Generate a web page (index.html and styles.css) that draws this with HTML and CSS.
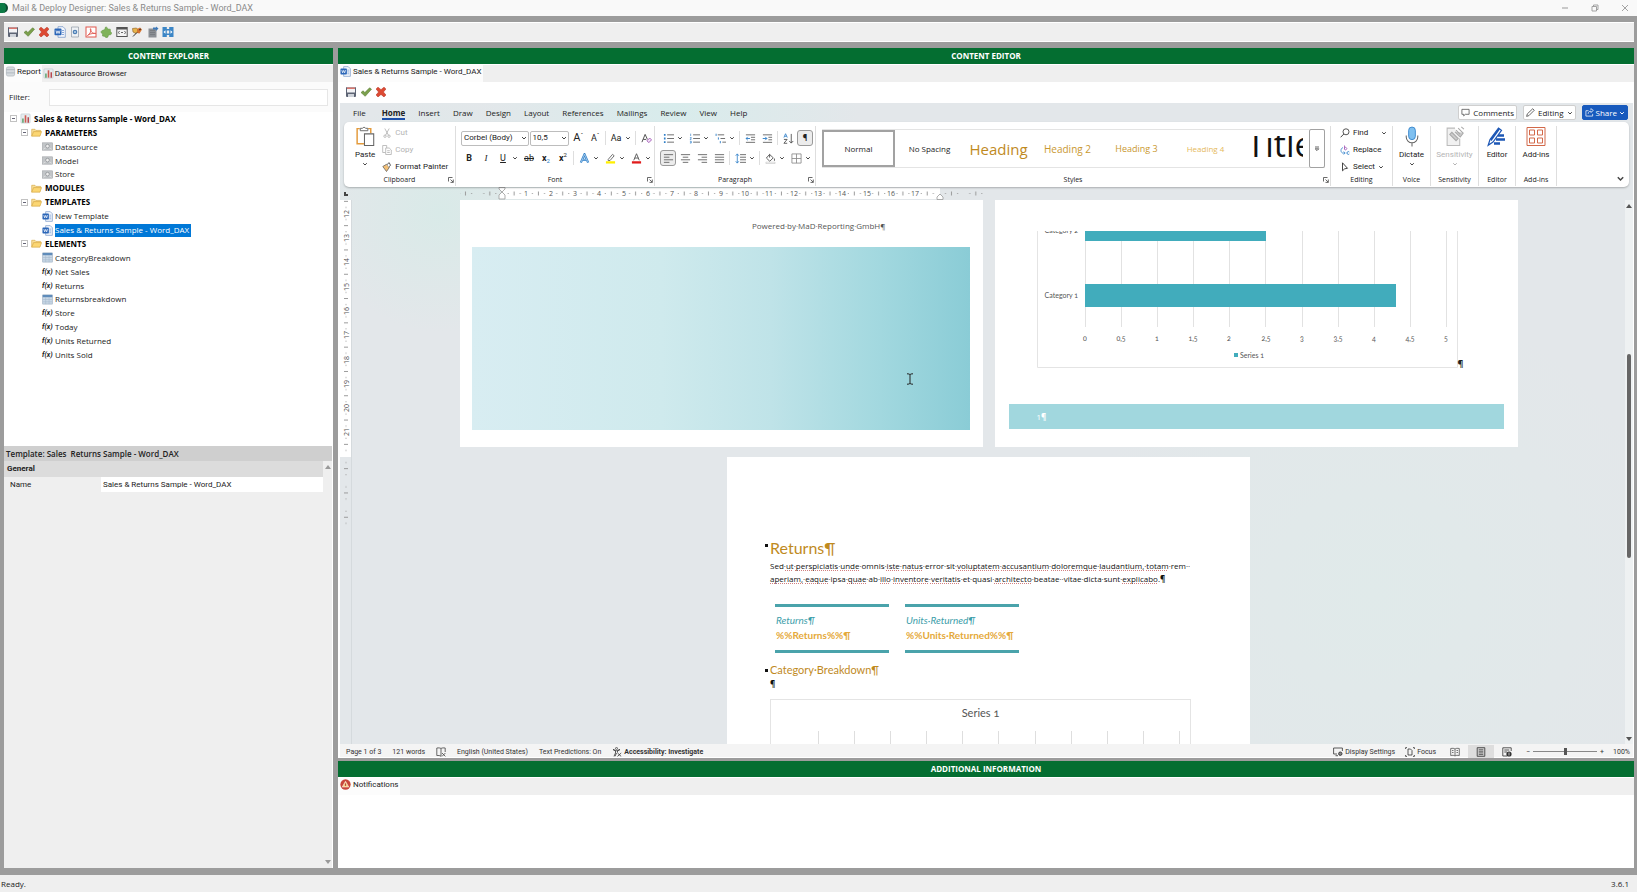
FILE: index.html
```
<!DOCTYPE html>
<html lang="en">
<head>
    <meta charset="UTF-8">
    <meta name="viewport" content="width=device-width, initial-scale=1.0">
    <title>Mail &amp; Deploy Designer</title>
    <link rel="stylesheet" href="styles.css">
</head>
<body>
    <!-- icon sprite -->
    <svg class="sprite" aria-hidden="true">
        <symbol id="i-save" viewBox="0 0 12 12"><rect x="1" y="1" width="10" height="10" rx="1" fill="#5d6474"/><rect x="2" y="1.500" width="8" height="5" fill="#f2f2f5"/><rect x="2" y="1.500" width="8" height="1.500" fill="#d9776f"/><rect x="3" y="8" width="6" height="3" fill="#cfd3da"/></symbol>
        <symbol id="i-check" viewBox="0 0 12 12"><path d="M1 6.500 3.200 4.800 4.800 6.600 9.600 1.800 11.500 3.200 5.200 10.300Z" fill="#7ba04c" stroke="#5c7d38" stroke-width=".6"/></symbol>
        <symbol id="i-cross" viewBox="0 0 12 12"><path d="M3 1.200 6 3.700 9 1.200 10.900 3 8.400 6 10.900 9 9 10.900 6 8.400 3 10.900 1.100 9 3.600 6 1.100 3Z" fill="#dd4a33" stroke="#b93425" stroke-width=".6"/></symbol>
        <symbol id="i-word" viewBox="0 0 12 12"><path d="M4 .7h5l2.300 2.300v8.300H4z" fill="#f3f6fb" stroke="#7d9cc9" stroke-width=".8"/><path d="M8 4.500h2M8 6.500h2M8 8.500h2" stroke="#6e97d4" stroke-width=".8"/><rect x=".5" y="2.600" width="7" height="6.600" rx=".8" fill="#2b66b8"/><path d="m2 4.500.9 3L4 4.800l1.100 2.700.9-3" fill="none" stroke="#fff" stroke-width=".8"/></symbol>
        <symbol id="i-page" viewBox="0 0 12 12"><path d="M2.500 1h7v10h-7z" fill="#eef1f4" stroke="#9aa3ad" stroke-width=".8"/><circle cx="6" cy="6" r="2.300" fill="#4c7fb5"/><circle cx="6" cy="6" r=".9" fill="#cfe1f2"/></symbol>
        <symbol id="i-pdf" viewBox="0 0 12 12"><rect x="1" y="1" width="10" height="10" fill="#fff" stroke="#e0564d"/><path d="M2.500 9.500C5.500 8 6.500 4 5.700 2.800S5 7 9.600 7.400 6 6.300 2.500 9.500" fill="none" stroke="#e0564d" stroke-width=".9"/></symbol>
        <symbol id="i-puzzle" viewBox="0 0 12 12"><path d="M5.500 1a1.700 1.700 0 0 1 2 2l2.800.2.200 2.500a1.600 1.600 0 0 1 0 3L8.500 9l-.6 2a1.700 1.700 0 0 1-3-.6L2.500 10l.1-2.500a1.500 1.500 0 0 1-.8-2.800L4.700 3.500Z" fill="#7fb35a" stroke="#5e9140" stroke-width=".5"/></symbol>
        <symbol id="i-console" viewBox="0 0 12 12"><rect x=".8" y="1.500" width="10.400" height="9" fill="#f4f4f4" stroke="#555"/><rect x="1" y="1.500" width="10" height="2" fill="#555"/><path d="m3.500 5-1 1.500 1 1.500M8.500 5l1 1.500-1 1.500M5 6.500h2" fill="none" stroke="#444" stroke-width=".8"/></symbol>
        <symbol id="i-plug" viewBox="0 0 12 12"><path d="m1.500 2.500 4-.5 2 2L5 7.500 2 6Z" fill="#e6b54b" stroke="#8a5a20" stroke-width=".6"/><path d="m6 3 3-1.500 2 2-2.500 4L6 7Z" fill="#d5742f"/><path d="m2 10.500 4-4M8 4l2-1" stroke="#333"/></symbol>
        <symbol id="i-export" viewBox="0 0 12 12"><path d="M1.500 2.500h8v9h-8z" fill="#8b8f94"/><path d="M3 4.500h5M3 6.500h5M3 8.500h5" stroke="#75797e" stroke-width=".8"/><path d="M6 3.500h3V5l2.500-2.500L9 .5v1H6z" fill="#3d78b8"/></symbol>
        <symbol id="i-fit" viewBox="0 0 12 12"><path d="M.5 1h4.300v10H.5zM7.200 1h4.300v10H7.200z" fill="#3c86c6"/><path d="M4 3h4v1.500H4zM4 7.500h4V9H4z" fill="#3c86c6"/><path d="m1.500 6 2-1.800v3.600zM10.500 6l-2-1.800v3.600z" fill="#fff"/></symbol>
        <symbol id="i-report" viewBox="0 0 12 12"><rect x="1" y="1" width="10" height="10" rx="1" fill="#e7edf0" stroke="#b5c1c7" stroke-width=".6"/><path d="M3.200 10.500V6" stroke="#5aa06a" stroke-width="1.600"/><path d="M6 10.500V2.500" stroke="#cf5b50" stroke-width="1.800"/><path d="M9 10.500V4.500" stroke="#b8454b" stroke-width="1.600"/></symbol>
        <symbol id="i-db" viewBox="0 0 12 12"><rect x="1.500" y="1" width="9" height="10" rx="2" fill="#d6dbdf" stroke="#aab3b9" stroke-width=".7"/><path d="M1.500 4h9M1.500 7.500h9" stroke="#9ca6ad" stroke-width=".7"/></symbol>
        <symbol id="i-folder" viewBox="0 0 12 12"><path d="M.8 10V2.500h3.500l1 1.200h5.200V5" fill="#f7df9a" stroke="#d4a640" stroke-width=".7"/><path d="M.8 10 2.800 5h8.700l-1.700 5Z" fill="#fbd673" stroke="#d4a640" stroke-width=".7"/></symbol>
        <symbol id="i-param" viewBox="0 0 12 12"><rect x=".5" y="2" width="11" height="8" fill="#c2c5c8" stroke="#9a9da1" stroke-width=".6"/><circle cx="6" cy="5.600" r="2" fill="#eee" stroke="#7c8085" stroke-width=".7"/><path d="M1.500 9 4 7.500M10.500 9 8 7.500" stroke="#eee" stroke-width=".7"/></symbol>
        <symbol id="i-table" viewBox="0 0 12 12"><rect x=".8" y="1" width="10.400" height="10" fill="#c9d8e6" stroke="#8ea3b8" stroke-width=".6"/><rect x=".8" y="1" width="10.400" height="2.500" fill="#5f8cba"/><path d="M4 3.500V11M7.700 3.500V11M1 6h10M1 8.500h10" stroke="#a3b8cc" stroke-width=".6"/></symbol>
        <symbol id="i-chev" viewBox="0 0 6 6"><path d="m1.200 2.200 1.800 1.800 1.800-1.800" fill="none" stroke="#444"/></symbol>
        <symbol id="i-launch" viewBox="0 0 6 6"><path d="M.5 4.500v-4h4M2.500 2.500l2.700 2.700M5.300 2.500v2.900H2.500" fill="none" stroke="#444" stroke-width=".8"/></symbol>
        <symbol id="i-paste" viewBox="0 0 18 20"><path d="M4 2.500H1.500V17H8M12 2.500h2.500V7" fill="none" stroke="#e49b3c" stroke-width="1.400"/><path d="M4.500 4.500V2.200h2.200a1.500 1.500 0 0 1 2.800 0h2.200v2.300z" fill="#fff" stroke="#666" stroke-width=".9"/><path d="M8.500 7.500h8.800v11H8.500z" fill="#fff" stroke="#666"/></symbol>
        <symbol id="i-cut" viewBox="0 0 10 10"><path d="m2.800.5 3.700 6.800M7.200.5 3.500 7.300" stroke="#b0b0b0" stroke-width=".8"/><g fill="none" stroke="#b0b0b0" stroke-width=".8"><circle cx="3" cy="8.200" r="1.200"/><circle cx="7" cy="8.200" r="1.200"/></g></symbol>
        <symbol id="i-copy" viewBox="0 0 10 10"><path d="M3.500 7.500H.7v-7h4V3M3.700 3h3.500L9.300 5v4.500H3.700zM5.200 5.700h2.600M5.200 7.500h2.600" fill="none" stroke="#b0b0b0" stroke-width=".8"/></symbol>
        <symbol id="i-painter" viewBox="0 0 10 10"><path d="M.8 4.500 4.500 2.300l2.800 3.200-2.800 4Z" fill="#f2c078" stroke="#555" stroke-width=".7"/><path d="m5 2.600 2.200-2 1.300 2.800L6.600 5" fill="#fff" stroke="#333" stroke-width=".8"/></symbol>
        <symbol id="i-clear" viewBox="0 0 12 12"><path d="M1 10 4.500 1.500 7 7M2.500 7h3.200" fill="none" stroke="#444"/><path d="m6.500 8.500 3-3L11.500 7.500l-3 3Z" fill="#f3e3f7" stroke="#9a4bb0" stroke-width=".9"/></symbol>
        <symbol id="i-hilite" viewBox="0 0 12 12"><path d="m3.500 7 4.700-5.500L10 3 5.500 8.200H3.500z" fill="#fff" stroke="#555" stroke-width=".9"/><path d="M1 9h10v2.500H1z" fill="#ffef00"/></symbol>
        <symbol id="i-fontcol" viewBox="0 0 12 12"><path d="M3 8 6 .8 9 8M4 5.500h4" fill="none" stroke="#555"/><path d="M1 9h10v2.500H1z" fill="#e01b1b"/></symbol>
        <symbol id="i-texteff" viewBox="0 0 12 12"><path d="M2 10.500 6 1.500l4 9M3.600 7.500h4.800" fill="none" stroke="#2f7fc8" stroke-width="2.400"/><path d="M2 10.500 6 1.500l4 9M3.600 7.500h4.800" fill="none" stroke="#d5e9f8" stroke-width=".7"/></symbol>
        <symbol id="i-bullets" viewBox="0 0 12 12"><path d="M4.500 2H12M4.500 6H12M4.500 10H12" stroke="#666"/><path d="M1 1h1.800v2H1zM1 5h1.800v2H1zM1 9h1.800v2H1z" fill="#2f7fc8"/></symbol>
        <symbol id="i-numbers" viewBox="0 0 12 12"><path d="M4.500 2H12M4.500 6H12M4.500 10H12" stroke="#666"/><path d="M1.800.7v2.600M1 5h1.500v.8L1 7h1.600M1 9h1.500v2H1M1.300 10h1.200" fill="none" stroke="#2f7fc8" stroke-width=".7"/></symbol>
        <symbol id="i-multi" viewBox="0 0 12 12"><path d="M3 2h7M6 6h5M8 10h4" stroke="#666"/><path d="M1.200.8v2.400M3.700 4.800v2.400M5.800 8.800v2.400" stroke="#2f7fc8"/></symbol>
        <symbol id="i-outdent" viewBox="0 0 12 12"><path d="M1 2h10M6.500 4.700H11M6.500 7.400H11M1 10.200h10" stroke="#666"/><path d="M5.500 6H1.200M3 4.200 1.200 6 3 7.800" fill="none" stroke="#2f7fc8"/></symbol>
        <symbol id="i-indent" viewBox="0 0 12 12"><path d="M1 2h10M7 4.700h4M7 7.400h4M1 10.200h10" stroke="#666"/><path d="M.8 6h4.500M3.500 4.200 5.300 6 3.500 7.800" fill="none" stroke="#2f7fc8"/></symbol>
        <symbol id="i-sort" viewBox="0 0 12 12"><path d="M1 5 2.800.8 4.700 5M1.700 3.600H4" fill="none" stroke="#2f7fc8" stroke-width=".9"/><path d="M1 7h3.500L1 11.200h3.600" fill="none" stroke="#444" stroke-width=".9"/><path d="M9 1v10M6.800 8.700 9 11l2.200-2.300" fill="none" stroke="#444" stroke-width=".9"/></symbol>
        <symbol id="i-left" viewBox="0 0 12 12"><path d="M1 1.800h10M1 4.600h6M1 7.400h10M1 10.200h6" stroke="#666"/></symbol>
        <symbol id="i-center" viewBox="0 0 12 12"><path d="M1 1.800h10M3 4.600h6M1 7.400h10M3 10.200h6" stroke="#666"/></symbol>
        <symbol id="i-right" viewBox="0 0 12 12"><path d="M1 1.800h10M5 4.600h6M1 7.400h10M5 10.200h6" stroke="#666"/></symbol>
        <symbol id="i-justify" viewBox="0 0 12 12"><path d="M1 1.800h10M1 4.600h10M1 7.400h10M1 10.200h10" stroke="#666"/></symbol>
        <symbol id="i-spacing" viewBox="0 0 12 12"><path d="M5.500 1.800H12M5.500 4.600H12M5.500 7.400H12M5.500 10.200H12" stroke="#666"/><path d="M2.500 1v10M.8 3 2.500 1l1.700 2M.8 9l1.700 2 1.700-2" fill="none" stroke="#2f7fc8" stroke-width=".9"/></symbol>
        <symbol id="i-bucket" viewBox="0 0 12 12"><path d="M5 1.500 9 5.300 5.200 9 1.500 5.500ZM5 1.500V5M10.300 6v2.500" fill="none" stroke="#444" stroke-width=".9"/><path d="M1 10h10v1.500H1z" fill="#fff" stroke="#bbb" stroke-width=".6"/></symbol>
        <symbol id="i-borders" viewBox="0 0 12 12"><path d="M1 1h10v10H1zM6 1v10M1 6h10" fill="none" stroke="#888" stroke-width=".9"/></symbol>
        <symbol id="i-find" viewBox="0 0 10 10"><circle cx="6" cy="3.800" r="3" fill="none" stroke="#444" stroke-width=".9"/><path d="M3.800 6 .6 9.300" stroke="#444"/></symbol>
        <symbol id="i-replace" viewBox="0 0 10 10"><path d="M4.500.5v4M4.500 3a1.200 1.200 0 1 1 0 1.200" fill="none" stroke="#9a4bb0" stroke-width=".8"/><path d="M9.300 7a1.400 1.400 0 1 0 0 2" fill="none" stroke="#2f7fc8" stroke-width=".9"/><path d="M3 2.500C.5 3.500.3 7 2.500 8H5M3.700 6.500 5.200 8 3.700 9.500" fill="none" stroke="#2f7fc8" stroke-width=".8"/></symbol>
        <symbol id="i-select" viewBox="0 0 10 10"><path d="M2.500.8v8l2.200-2L7.500 6.300Z" fill="#fff" stroke="#333" stroke-width=".9"/></symbol>
        <symbol id="i-mic" viewBox="0 0 18 20"><rect x="5.800" y="1" width="6.400" height="12" rx="3.200" fill="#7fc0f0" stroke="#2f7fc8" stroke-width=".8"/><path d="M3.500 9v1.500a5.500 5.500 0 0 0 11 0V9M9 16v3.500" fill="none" stroke="#666"/></symbol>
        <symbol id="i-sens" viewBox="0 0 18 20"><path d="M9 2H1.500v16.500h12V12" fill="#f1f1f1" stroke="#bbb"/><path d="m4 8 6 6 2-2-6-6zM10 4l4 4M12 2l5 5M15 .8 17.500 3M9 5.500l5 5 3-4" fill="#ccc" stroke="#aaa"/></symbol>
        <symbol id="i-editor" viewBox="0 0 20 20"><path d="M11 9h6M9 13h9M7 17h6" stroke="#1d57b5" stroke-width="2.400"/><path d="M1.200 18.700 3 13 11.500 1.500l3 2.300L6 15.500Z" fill="#fff" stroke="#1d57b5" stroke-width="1.200"/><path d="M3 13 11.500 1.500 13 2.700 4.500 14.500Z" fill="#1d57b5"/></symbol>
        <symbol id="i-addins" viewBox="0 0 20 20"><path d="M1 1h18v18H1zM3.500 3.500h5v5h-5zM11.500 3.500h5v5h-5zM3.500 11.500h5v5h-5zM11.500 11.500h5v5h-5z" fill="none" stroke="#d2694a"/></symbol>
        <symbol id="i-comment" viewBox="0 0 10 10"><path d="M1 1.500h8v5.500H4.800L3 8.800V7H1z" fill="none" stroke="#444" stroke-width=".8"/></symbol>
        <symbol id="i-pencil" viewBox="0 0 10 10"><path d="M.7 9.300 1.500 6.500 7.500.8l1.700 1.700-6 6Z" fill="none" stroke="#444" stroke-width=".9"/></symbol>
        <symbol id="i-share" viewBox="0 0 10 10"><path d="M4 3H1v6h7.500V6.500M3.500 6.500C3.500 4.500 5 3.500 6.500 3.500V5L9.300 2.700 6.500.7V2" fill="none" stroke="#fff" stroke-width=".8"/></symbol>
        <symbol id="i-proof" viewBox="0 0 10 10"><path d="M5 1.500C4 .8 2.500.8.8 1v7.500c1.700-.2 3.200 0 4.200.7M5 1.500C6 .8 7.500.8 9.200 1v4M5 1.500v7.700M6 6l3.400 3.400M9.400 6 6 9.400" fill="none" stroke="#444" stroke-width=".8"/></symbol>
        <symbol id="i-access" viewBox="0 0 10 10"><circle cx="4.500" cy="1.400" r="1" fill="none" stroke="#333" stroke-width=".7"/><path d="M1 2.500 3.500 4v2L2 9.300M8 2.500 5.500 4v1.500M1 2.500l3.500 1.200L8 2.500M5.500 6l3.700 3.400M9.200 6 5.500 9.400M4.500 6 3 9.300" fill="none" stroke="#333" stroke-width=".8"/></symbol>
        <symbol id="i-display" viewBox="0 0 10 10"><path d="M4 7H.6V1h8.800v3M2.500 8.700H5" fill="none" stroke="#333" stroke-width=".8"/><circle cx="7.300" cy="6.700" r="1.700" fill="#888" stroke="#333" stroke-width=".9"/></symbol>
        <symbol id="i-focus" viewBox="0 0 10 10"><path d="M2 .6H.6V2M.6 8v1.400H2M8 .6h1.400V2M9.400 8v1.400H8M3 2h2.500L7 3.500V8H3z" fill="none" stroke="#333" stroke-width=".8"/></symbol>
        <symbol id="i-read" viewBox="0 0 10 10"><path d="M5 2C4 1.200 2.500 1.200.7 1.500v7C2.500 8.200 4 8.200 5 9c1-.8 2.500-.8 4.300-.5v-7C7.500 1.200 6 1.200 5 2ZM5 2v7M2 3.500h1.500M2 5.500h1.500M6.500 3.500H8M6.500 5.500H8" fill="none" stroke="#555" stroke-width=".8"/></symbol>
        <symbol id="i-print" viewBox="0 0 10 10"><path d="M1.200.7h7.600v8.600H1.200z" fill="#ccc" stroke="#444" stroke-width=".9"/><path d="M2.800 2.700h4.400M2.800 4.300h4.400M2.800 5.900h4.400M2.800 7.500h4.400" stroke="#444" stroke-width=".7"/></symbol>
        <symbol id="i-web" viewBox="0 0 10 10"><path d="M5 9H.8V.8h8.400V4M2.300 3h5M2.300 5H5" fill="none" stroke="#444" stroke-width=".9"/><circle cx="7" cy="7" r="2.600" fill="#333"/><path d="M7 5.500v3" stroke="#fff" stroke-width=".7"/></symbol>
        <symbol id="i-warn" viewBox="0 0 12 12"><circle cx="6" cy="6" r="5.600" fill="#c9473b"/><path d="M6 2.500 9.500 8.700h-7Z" fill="#f5c77c" stroke="#fff" stroke-width=".6"/><path d="M6 4.800v2.700" stroke="#a5352b" stroke-width=".9"/></symbol>
    </svg>

    <header class="titlebar">
        <span class="app-dot"></span>
        <span>Mail &amp; Deploy Designer: Sales &amp; Returns Sample - Word_DAX</span>
        <div class="win-buttons">
            <button aria-label="Minimize"><svg viewBox="0 0 10 10"><path d="M2 5h6" stroke="#999"/></svg></button>
            <button aria-label="Restore"><svg viewBox="0 0 10 10"><path d="M2 3.500h4.500V8H2zM3.500 3.500V2H8v4.500H6.500" fill="none" stroke="#999" stroke-width=".9"/></svg></button>
            <button aria-label="Close"><svg viewBox="0 0 10 10"><path d="m2 2 6 6M8 2 2 8" stroke="#999" stroke-width=".9"/></svg></button>
        </div>
    </header>

    <div class="shell">
        <nav class="main-toolbar">
            <div class="tools">
                <button aria-label="Save"><svg><use href="#i-save"/></svg></button>
                <button aria-label="Apply"><svg><use href="#i-check"/></svg></button>
                <button aria-label="Cancel"><svg><use href="#i-cross"/></svg></button>
                <button aria-label="Word"><svg><use href="#i-word"/></svg></button>
                <button aria-label="Preview"><svg><use href="#i-page"/></svg></button>
                <button aria-label="PDF"><svg><use href="#i-pdf"/></svg></button>
                <button aria-label="Plugin"><svg><use href="#i-puzzle"/></svg></button>
                <button aria-label="Variables"><svg><use href="#i-console"/></svg></button>
                <button aria-label="Connect"><svg><use href="#i-plug"/></svg></button>
                <button aria-label="Export"><svg><use href="#i-export"/></svg></button>
                <button aria-label="Fit"><svg><use href="#i-fit"/></svg></button>
            </div>
        </nav>

        <div class="columns">
            <aside class="explorer">
                <h2 class="panel-title">CONTENT EXPLORER</h2>
                <div class="tabs">
                    <button class="tab active"><svg><use href="#i-db"/></svg>Report</button>
                    <button class="tab"><svg><use href="#i-report"/></svg>Datasource Browser</button>
                </div>
                <div class="filter">
                    <label for="filter">Filter:</label>
                    <input id="filter" type="text">
                </div>
                <div class="tree-wrap">
                    <ul class="tree">
                        <li class="l0"><i class="exp"></i><svg><use href="#i-report"/></svg><b>Sales &amp; Returns Sample - Word_DAX</b></li>
                        <li class="l1"><i class="exp"></i><svg><use href="#i-folder"/></svg><b>PARAMETERS</b></li>
                        <li class="l2"><svg><use href="#i-param"/></svg><span>Datasource</span></li>
                        <li class="l2"><svg><use href="#i-param"/></svg><span>Model</span></li>
                        <li class="l2"><svg><use href="#i-param"/></svg><span>Store</span></li>
                        <li class="l1"><i class="exp none"></i><svg><use href="#i-folder"/></svg><b>MODULES</b></li>
                        <li class="l1"><i class="exp"></i><svg><use href="#i-folder"/></svg><b>TEMPLATES</b></li>
                        <li class="l2"><svg><use href="#i-word"/></svg><span>New Template</span></li>
                        <li class="l2"><svg><use href="#i-word"/></svg><span class="selected">Sales &amp; Returns Sample - Word_DAX</span></li>
                        <li class="l1"><i class="exp"></i><svg><use href="#i-folder"/></svg><b>ELEMENTS</b></li>
                        <li class="l2"><svg><use href="#i-table"/></svg><span>CategoryBreakdown</span></li>
                        <li class="l2"><em>f(x)</em><span>Net Sales</span></li>
                        <li class="l2"><em>f(x)</em><span>Returns</span></li>
                        <li class="l2"><svg><use href="#i-table"/></svg><span>Returnsbreakdown</span></li>
                        <li class="l2"><em>f(x)</em><span>Store</span></li>
                        <li class="l2"><em>f(x)</em><span>Today</span></li>
                        <li class="l2"><em>f(x)</em><span>Units Returned</span></li>
                        <li class="l2"><em>f(x)</em><span>Units Sold</span></li>
                    </ul>
                </div>
                <section class="props">
                    <h3>Template: Sales&nbsp; Returns Sample - Word_DAX</h3>
                    <div class="props-body">
                        <table>
                            <tr><th colspan="2">General</th></tr>
                            <tr><td><label for="prop-name">Name</label></td><td><input id="prop-name" type="text" value="Sales &amp; Returns Sample - Word_DAX"></td></tr>
                        </table>
                        <div class="props-scroll"><span class="up"></span><span class="down"></span></div>
                    </div>
                </section>
            </aside>

            <main class="work">
                <section class="editor">
                    <h2 class="panel-title">CONTENT EDITOR</h2>
                    <div class="tabs">
                        <button class="tab active"><svg><use href="#i-word"/></svg>Sales &amp; Returns Sample - Word_DAX</button>
                    </div>
                    <div class="doc-toolbar">
                        <button aria-label="Save"><svg><use href="#i-save"/></svg></button>
                        <button aria-label="Apply"><svg><use href="#i-check"/></svg></button>
                        <button aria-label="Cancel"><svg><use href="#i-cross"/></svg></button>
                    </div>

                    <div class="word">
                        <div class="menu">
                            <button>File</button>
                            <button class="current">Home</button>
                            <button>Insert</button>
                            <button>Draw</button>
                            <button>Design</button>
                            <button>Layout</button>
                            <button>References</button>
                            <button>Mailings</button>
                            <button>Review</button>
                            <button>View</button>
                            <button>Help</button>
                            <div class="menu-right">
                                <button class="pill"><svg><use href="#i-comment"/></svg>Comments</button>
                                <button class="pill"><svg><use href="#i-pencil"/></svg>Editing<svg class="chev"><use href="#i-chev"/></svg></button>
                                <button class="pill share"><svg><use href="#i-share"/></svg>Share<svg class="chev" viewBox="0 0 6 6"><path d="m1.200 2.200 1.800 1.800 1.800-1.800" fill="none" stroke="#fff"/></svg></button>
                            </div>
                        </div>

                        <div class="ribbon">
                            <div class="group g-clip">
                                <div class="body clip">
                                    <button class="big"><svg><use href="#i-paste"/></svg>Paste<svg class="chev"><use href="#i-chev"/></svg></button>
                                    <div class="stack">
                                        <button disabled><svg><use href="#i-cut"/></svg>Cut</button>
                                        <button disabled><svg><use href="#i-copy"/></svg>Copy</button>
                                        <button><svg><use href="#i-painter"/></svg>Format Painter</button>
                                    </div>
                                </div>
                                <div class="caption">Clipboard<svg><use href="#i-launch"/></svg></div>
                            </div>
                            <div class="group g-font">
                                <div class="body rows">
                                    <div class="row">
                                        <select class="font-name" aria-label="Font"><option>Corbel (Body)</option></select>
                                        <select class="font-size" aria-label="Font size"><option>10,5</option></select>
                                        <button class="ib big-a">A<sup>ˆ</sup></button>
                                        <button class="ib">A<sup>ˇ</sup></button>
                                        <i class="sep"></i>
                                        <button class="split"><span>Aa</span><svg class="chev"><use href="#i-chev"/></svg></button>
                                        <i class="sep"></i>
                                        <button class="ib" aria-label="Clear formatting"><svg><use href="#i-clear"/></svg></button>
                                    </div>
                                    <div class="row">
                                        <button class="ib"><b>B</b></button>
                                        <button class="ib serif"><i>I</i></button>
                                        <button class="split"><span><u>U</u></span><svg class="chev"><use href="#i-chev"/></svg></button>
                                        <button class="ib"><s>ab</s></button>
                                        <button class="ib"><b>x</b><sub>2</sub></button>
                                        <button class="ib"><b>x</b><sup>2</sup></button>
                                        <i class="sep"></i>
                                        <button class="split" aria-label="Text effects"><span><svg><use href="#i-texteff"/></svg></span><svg class="chev"><use href="#i-chev"/></svg></button>
                                        <button class="split" aria-label="Highlight"><span><svg><use href="#i-hilite"/></svg></span><svg class="chev"><use href="#i-chev"/></svg></button>
                                        <button class="split" aria-label="Font color"><span><svg><use href="#i-fontcol"/></svg></span><svg class="chev"><use href="#i-chev"/></svg></button>
                                    </div>
                                </div>
                                <div class="caption">Font<svg><use href="#i-launch"/></svg></div>
                            </div>
                            <div class="group g-para">
                                <div class="body rows">
                                    <div class="row">
                                        <button class="split" aria-label="Bullets"><span><svg><use href="#i-bullets"/></svg></span><svg class="chev"><use href="#i-chev"/></svg></button>
                                        <button class="split" aria-label="Numbering"><span><svg><use href="#i-numbers"/></svg></span><svg class="chev"><use href="#i-chev"/></svg></button>
                                        <button class="split" aria-label="Multilevel list"><span><svg><use href="#i-multi"/></svg></span><svg class="chev"><use href="#i-chev"/></svg></button>
                                        <i class="sep"></i>
                                        <button class="ib" aria-label="Decrease indent"><svg><use href="#i-outdent"/></svg></button>
                                        <button class="ib" aria-label="Increase indent"><svg><use href="#i-indent"/></svg></button>
                                        <i class="sep"></i>
                                        <button class="ib" aria-label="Sort"><svg><use href="#i-sort"/></svg></button>
                                        <button class="ib on"><b>¶</b></button>
                                    </div>
                                    <div class="row">
                                        <button class="ib on" aria-label="Align left"><svg><use href="#i-left"/></svg></button>
                                        <button class="ib" aria-label="Center"><svg><use href="#i-center"/></svg></button>
                                        <button class="ib" aria-label="Align right"><svg><use href="#i-right"/></svg></button>
                                        <button class="ib" aria-label="Justify"><svg><use href="#i-justify"/></svg></button>
                                        <i class="sep"></i>
                                        <button class="split" aria-label="Line spacing"><span><svg><use href="#i-spacing"/></svg></span><svg class="chev"><use href="#i-chev"/></svg></button>
                                        <i class="sep"></i>
                                        <button class="split" aria-label="Shading"><span><svg><use href="#i-bucket"/></svg></span><svg class="chev"><use href="#i-chev"/></svg></button>
                                        <button class="split" aria-label="Borders"><span><svg><use href="#i-borders"/></svg></span><svg class="chev"><use href="#i-chev"/></svg></button>
                                    </div>
                                </div>
                                <div class="caption">Paragraph<svg><use href="#i-launch"/></svg></div>
                            </div>
                            <div class="group g-styles">
                                <div class="body gallery">
                                    <button class="picked">Normal</button>
                                    <button>No Spacing</button>
                                    <button class="h1">Heading</button>
                                    <button class="h2">Heading 2</button>
                                    <button class="h3">Heading 3</button>
                                    <button class="h4">Heading 4</button>
                                    <button class="title"><span>Title</span></button>
                                    <button class="more" aria-label="More styles"><svg viewBox="0 0 6 6"><path d="M1 1h4M1.200 2.800 3 4.600l1.800-1.800Z" fill="none" stroke="#444" stroke-width=".8"/></svg></button>
                                </div>
                                <div class="caption">Styles<svg><use href="#i-launch"/></svg></div>
                            </div>
                            <div class="group g-edit">
                                <div class="body stack">
                                    <button><svg><use href="#i-find"/></svg>Find<svg class="chev far"><use href="#i-chev"/></svg></button>
                                    <button><svg><use href="#i-replace"/></svg>Replace</button>
                                    <button><svg><use href="#i-select"/></svg>Select<svg class="chev"><use href="#i-chev"/></svg></button>
                                </div>
                                <div class="caption">Editing</div>
                            </div>
                            <div class="group g-voice">
                                <div class="body"><button class="big"><svg><use href="#i-mic"/></svg>Dictate<svg class="chev"><use href="#i-chev"/></svg></button></div>
                                <div class="caption">Voice</div>
                            </div>
                            <div class="group g-sens">
                                <div class="body"><button class="big" disabled><svg><use href="#i-sens"/></svg>Sensitivity<svg class="chev"><use href="#i-chev"/></svg></button></div>
                                <div class="caption">Sensitivity</div>
                            </div>
                            <div class="group g-editor">
                                <div class="body"><button class="big"><svg><use href="#i-editor"/></svg>Editor</button></div>
                                <div class="caption">Editor</div>
                            </div>
                            <div class="group g-addins">
                                <div class="body"><button class="big"><svg><use href="#i-addins"/></svg>Add-ins</button></div>
                                <div class="caption">Add-ins</div>
                            </div>
                            <button class="collapse" aria-label="Collapse ribbon"><svg><use href="#i-chev"/></svg></button>
                        </div>

                        <div class="hruler">
                            <span class="corner"></span>
                            <div class="hruler-track">
                                <svg class="hscale" viewBox="0 0 523 13">
                                    <defs>
                                        <pattern id="ticks" x="42" y="0" width="24.300" height="13" patternUnits="userSpaceOnUse">
                                            <path d="M6.100 6v1M12.100 4.500v4M18.200 6v1" stroke="#999"/>
                                        </pattern>
                                    </defs>
                                    <rect x="42" y="1" width="438" height="11" fill="#fff"/>
                                    <rect width="523" height="13" fill="url(#ticks)"/>
                                    <g class="nums">
                                        <text x="66" y="9">1</text><text x="91" y="9">2</text><text x="115" y="9">3</text><text x="139" y="9">4</text>
                                        <text x="164" y="9">5</text><text x="188" y="9">6</text><text x="212" y="9">7</text><text x="236" y="9">8</text>
                                        <text x="261" y="9">9</text><text x="285" y="9">10</text><text x="309" y="9">11</text><text x="334" y="9">12</text>
                                        <text x="358" y="9">13</text><text x="382" y="9">14</text><text x="407" y="9">15</text><text x="431" y="9">16</text>
                                        <text x="455" y="9">17</text>
                                    </g>
                                    <path d="M39 .5h6v1.500L42 5l-3-3zM42 5l3 3v4h-6V8zM480 7l3 3v2.500h-6V10z" fill="#fff" stroke="#999" stroke-width=".8"/>
                                </svg>
                            </div>
                        </div>

                        <div class="canvas">
                            <div class="vruler">
                                <svg viewBox="0 0 12 325">
                                    <defs>
                                        <pattern id="vticks" x="0" y="13.500" width="12" height="24.300" patternUnits="userSpaceOnUse">
                                            <path d="M5.500 6.100h1M4 12.100h4M5.500 18.200h1" stroke="#999"/>
                                        </pattern>
                                    </defs>
                                    <rect width="11" height="257" fill="#fff"/>
                                    <rect width="12" height="325" fill="url(#vticks)"/>
                                    <g class="nums">
                                        <text transform="translate(9 14) rotate(-90)">12</text><text transform="translate(9 38) rotate(-90)">13</text>
                                        <text transform="translate(9 62) rotate(-90)">14</text><text transform="translate(9 87) rotate(-90)">15</text>
                                        <text transform="translate(9 111) rotate(-90)">16</text><text transform="translate(9 135) rotate(-90)">17</text>
                                        <text transform="translate(9 160) rotate(-90)">18</text><text transform="translate(9 184) rotate(-90)">19</text>
                                        <text transform="translate(9 208) rotate(-90)">20</text><text transform="translate(9 232) rotate(-90)">21</text>
                                    </g>
                                </svg>
                            </div>
                            <div class="pages">
                                <article class="page cover">
                                    <p>Powered·by·MaD·Reporting·GmbH¶</p>
                                    <div class="cover-band">
                                        <svg class="ibeam" viewBox="0 0 8 12"><path d="M1 .8c1.500 0 3 .2 3 1.200 0-1 1.500-1.200 3-1.200M4 2v8M1 11.200c1.500 0 3-.2 3-1.200 0 1 1.500 1.200 3 1.200" fill="none" stroke="#222"/></svg>
                                    </div>
                                </article>
                                <article class="page chart-page">
                                    <div class="chart-line">
                                        <svg class="chart" viewBox="0 0 421 137">
                                            <path d="M.5 0v136.500h420V0" fill="none" stroke="#e4e4e4"/>
                                            <path d="M48.500 0v96M84.500 0v96M120.500 0v96M156.500 0v96M192.500 0v96M228.500 0v96M265.500 0v96M301.500 0v96M337.500 0v96M373.500 0v96M409.500 0v96" stroke="#e2e2e2"/>
                                            <rect x="48" y="0" width="181" height="10" fill="#41acbc"/>
                                            <rect x="48" y="53" width="311" height="23" fill="#41acbc"/>
                                            <g class="end"><text x="41" y="2">Category 2</text><text x="41" y="67">Category 1</text></g>
                                            <g class="mid">
                                                <text x="48" y="110">0</text><text x="84" y="110">0,5</text><text x="120" y="110">1</text><text x="156" y="110">1,5</text>
                                                <text x="192" y="110">2</text><text x="229" y="110">2,5</text><text x="265" y="110">3</text><text x="301" y="110">3,5</text>
                                                <text x="337" y="110">4</text><text x="373" y="110">4,5</text><text x="409" y="110">5</text>
                                            </g>
                                            <rect x="197" y="122" width="4" height="4" fill="#41acbc"/>
                                            <text x="203" y="127">Series 1</text>
                                        </svg>
                                        <b>¶</b>
                                    </div>
                                    <footer>1<b>¶</b></footer>
                                </article>
                                <article class="page returns">
                                    <h1>Returns¶</h1>
                                    <p>Sed·<u>ut</u>·<u>perspiciatis</u>·<u>unde</u>·omnis·<u>iste</u>·<u>natus</u>·error·sit·<u>voluptatem</u>·<u>accusantium</u>·<u>doloremque</u>·<u>laudantium,</u>·<u>totam</u>·rem··<br><u>aperiam,</u>·<u>eaque</u>·ipsa·<u>quae</u>·ab·<u>illo</u>·<u>inventore</u>·<u>veritatis</u>·et·quasi·<u>architecto</u>·beatae··vitae·dicta·sunt·<u>explicabo</u>.<b>¶</b></p>
                                    <div class="kpis">
                                        <div class="kpi"><i>Returns¶</i><b>%%Returns%%¶</b></div>
                                        <div class="kpi"><i>Units·Returned¶</i><b>%%Units·Returned%%¶</b></div>
                                    </div>
                                    <h2>Category·Breakdown¶</h2>
                                    <p class="blank"><b>¶</b></p>
                                    <div class="series">
                                        <span>Series 1</span>
                                        <svg viewBox="0 0 419 40"><path d="M47.500 0v40M83.500 0v40M119.500 0v40M155.500 0v40M191.500 0v40M227.500 0v40M264.500 0v40M300.500 0v40M336.500 0v40M372.500 0v40M408.500 0v40" stroke="#dedede"/></svg>
                                    </div>
                                </article>
                            </div>
                            <div class="vscroll"><span class="up"></span><span class="thumb"></span><span class="down"></span></div>
                        </div>

                        <div class="word-status">
                            <span>Page 1 of 3</span>
                            <span>121 words</span>
                            <svg><use href="#i-proof"/></svg>
                            <span>English (United States)</span>
                            <span>Text Predictions: On</span>
                            <span class="with-icon"><svg><use href="#i-access"/></svg><b>Accessibility: Investigate</b></span>
                            <div class="status-right">
                                <div class="status-links">
                                    <span class="with-icon"><svg><use href="#i-display"/></svg>Display Settings</span>
                                    <span class="with-icon"><svg><use href="#i-focus"/></svg>Focus</span>
                                </div>
                                <div class="views">
                                    <button aria-label="Read mode"><svg><use href="#i-read"/></svg></button>
                                    <button class="on" aria-label="Print layout"><svg><use href="#i-print"/></svg></button>
                                    <button aria-label="Web layout"><svg><use href="#i-web"/></svg></button>
                                </div>
                                <div class="zoom">
                                    <span>−</span>
                                    <input type="range" min="0" max="200" value="100" aria-label="Zoom">
                                    <span>+</span>
                                </div>
                                <span>100%</span>
                            </div>
                        </div>
                    </div>
                </section>

                <section class="info">
                    <h2 class="panel-title">ADDITIONAL INFORMATION</h2>
                    <div class="tabs">
                        <button class="tab active"><svg><use href="#i-warn"/></svg>Notifications</button>
                    </div>
                </section>
            </main>
        </div>
    </div>

    <footer class="statusbar"><span>Ready.</span><span>3.6.1</span></footer>
</body>
</html>
```
FILE: styles.css
```
* {
    box-sizing: border-box;
}

body {
    margin: 0;
    height: 100vh;
    display: flex;
    flex-direction: column;
    overflow: hidden;
    font-family: "Open Sans", "Noto Sans", sans-serif;
    font-size: 8px;
    line-height: 12px;
    color: #222;
    background-color: #efefef;
}

h1, h2, h3, p, ul {
    margin: 0;
    padding: 0;
}

button, input, select {
    font: inherit;
    color: inherit;
    border: none;
    background: none;
    padding: 0;
    margin: 0;
}

button {
    display: inline-flex;
    align-items: center;
    justify-content: center;
    white-space: nowrap;
}

svg {
    width: 12px;
    height: 12px;
    flex: none;
    display: block;
}

.sprite {
    position: absolute;
    width: 0;
    height: 0;
}

.chev {
    width: 6px;
    height: 6px;
}

/* window frame */
.titlebar {
    height: 16px;
    flex: none;
    display: flex;
    align-items: center;
    gap: 4px;
    font-family: Roboto, "Open Sans", sans-serif;
    font-size: 9px;
    background-color: #f9f9f9;
    color: #8a8a8a;
}

.app-dot {
    width: 8px;
    height: 10px;
    border-radius: 0 5px 5px 0;
    background-color: #0b7a45;
    border-right: 2px solid #0c4a30;
}

.win-buttons {
    margin-left: auto;
    display: flex;
    gap: 20px;
    padding-right: 7px;
}

.win-buttons svg {
    width: 10px;
    height: 10px;
}

.shell {
    flex: 1;
    min-height: 0;
    display: flex;
    flex-direction: column;
    gap: 6px;
    padding: 6px 3px 7px 4px;
    background-color: #9c9c9c;
}

.main-toolbar {
    height: 20px;
    flex: none;
    display: flex;
    align-items: center;
    padding-left: 3px;
    background-color: #efefef;
    border-top: 1px solid #fff;
    border-bottom: 1px solid #fff;
}

.tools {
    width: 167px;
    display: flex;
    justify-content: space-between;
}

.columns {
    flex: 1;
    min-height: 0;
    display: flex;
    gap: 5px;
}

.statusbar {
    height: 17px;
    flex: none;
    display: flex;
    align-items: center;
    justify-content: space-between;
    padding: 0 8px 0 1px;
}

.panel-title {
    height: 16px;
    flex: none;
    line-height: 16px;
    font-size: 8px;
    text-align: center;
    color: #fff;
    background-color: #046e31;
}

.tabs {
    height: 18px;
    flex: none;
    display: flex;
    font-family: Roboto, "Open Sans", sans-serif;
    background-color: #efefef;
    border-top: 1px solid #fff;
}

.tab {
    gap: 2px;
    padding: 0 2px;
}

.tab.active {
    padding-bottom: 4px;
    background-color: #fcfcfc;
}

.tab svg {
    width: 11px;
    height: 11px;
}

/* content explorer */
.explorer {
    width: 329px;
    flex: none;
    display: flex;
    flex-direction: column;
    background-color: #fff;
}

.explorer .tab {
    padding-left: 1px;
    padding-right: 1px;
    gap: 1px;
}

.filter {
    height: 30px;
    flex: none;
    display: flex;
    align-items: center;
    padding: 0 5px;
    background-color: #fbfbfb;
}

.filter label {
    width: 40px;
}

.filter input {
    flex: 1;
    height: 17px;
    background-color: #fff;
    border: 1px solid #e6e6e6;
}

.tree-wrap {
    flex: none;
    height: 334px;
}

.tree {
    height: 250px;
    display: grid;
    grid-auto-rows: 1fr;
    list-style: none;
}

.tree li {
    display: flex;
    align-items: center;
    gap: 2px;
}

.tree svg {
    width: 11px;
    height: 11px;
}

.tree em {
    width: 11px;
    font-size: 7px;
    font-weight: bold;
    font-family: Roboto, sans-serif;
    white-space: nowrap;
}

.tree b {
    color: #000;
}

.l0 { padding-left: 6px; }
.l1 { padding-left: 17px; }
.l2 { padding-left: 38px; }

.tree li.l0, .tree li.l1 {
    gap: 3px;
}

.exp {
    width: 7px;
    height: 7px;
    border: 1px solid #c2c2c2;
    background: linear-gradient(#667, #667) center / 3px 1px no-repeat;
}

.exp.none {
    visibility: hidden;
}

.selected {
    height: 13px;
    padding-right: 2px;
    color: #fff;
    background-color: #0078d7;
}

.props {
    flex: 1;
    display: flex;
    flex-direction: column;
    margin-right: 1px;
    background-color: #efefef;
}

.props h3 {
    height: 15px;
    padding-left: 2px;
    font-size: 8px;
    line-height: 16px;
    font-weight: 600;
    background-color: #cfcfcf;
}

.props-body {
    flex: 1;
    display: flex;
    font-family: Roboto, "Open Sans", sans-serif;
}

.props table {
    flex: 1;
    align-self: flex-start;
    border-collapse: collapse;
}

.props th {
    height: 16px;
    padding: 0 3px;
    text-align: left;
    background-color: #dcdcdc;
}

.props td {
    height: 15px;
    padding: 0;
}

.props td:first-child {
    width: 97px;
    padding-left: 6px;
}

.props td input {
    width: 100%;
    height: 15px;
    padding-left: 2px;
    background-color: #fff;
    display: block;
}

.props-scroll {
    width: 9px;
    display: flex;
    flex-direction: column;
    justify-content: space-between;
    align-items: center;
    padding: 4px 0;
}

.up, .down {
    border: 3px solid transparent;
    border-top: none;
    border-bottom: 4px solid #999;
}

.down {
    border-top: 4px solid #999;
    border-bottom: none;
}

/* right side */
.work {
    flex: 1;
    min-width: 0;
    display: flex;
    flex-direction: column;
    gap: 3px;
}

.editor {
    flex: 1;
    min-height: 0;
    display: flex;
    flex-direction: column;
    background-color: #fff;
    padding-bottom: 1px;
}

.doc-toolbar {
    height: 21px;
    flex: none;
    display: flex;
    align-items: center;
    gap: 3px;
    padding: 0 0 1px 7px;
}

.info {
    height: 107px;
    flex: none;
    background-color: #fff;
}

/* embedded word */
.word {
    flex: 1;
    min-height: 0;
    display: flex;
    flex-direction: column;
    margin: 0 1px 0 2px;
    background:
        radial-gradient(circle at 100px 110px, #d9eae8 0, transparent 120px),
        radial-gradient(circle at 330px 0, #d8ecec 0, transparent 190px),
        radial-gradient(circle at 80% 75%, #e0eaea 0, transparent 300px),
        #e3e7ea;
}

.menu {
    height: 19px;
    flex: none;
    display: flex;
    align-items: center;
    gap: 13px;
    padding: 0 5px 0 13px;
}

.menu .current {
    font-weight: bold;
    height: 15px;
    border-top: 2px solid transparent;
    border-bottom: 2px solid #1d4fa8;
    margin-left: 3px;
}

.menu-right {
    margin-left: auto;
    display: flex;
    gap: 6px;
}

.menu .pill {
    height: 15px;
    gap: 3px;
    padding: 0 2px;
    border: 1px solid #cfcfcf;
    border-radius: 2px;
    background-color: #fff;
}

.pill svg {
    width: 9px;
    height: 9px;
}

.pill .chev {
    width: 6px;
    height: 6px;
}

.menu .share {
    color: #fff;
    gap: 2px;
    border-color: #185abd;
    background-color: #185abd;
}

.ribbon {
    height: 65px;
    flex: none;
    display: flex;
    margin: 0 4px;
    padding: 4px 0 1px;
    border-radius: 5px;
    font-family: Roboto, "Open Sans", sans-serif;
    background-color: #fff;
    box-shadow: 0 1px 2px rgba(0, 0, 0, 0.25);
    position: relative;
}

.group {
    flex: none;
    display: flex;
    flex-direction: column;
    border-right: 1px solid #dedede;
}

.g-clip { width: 112px; }
.g-font { width: 199px; }
.g-para { width: 161px; }
.g-styles { flex: 1; min-width: 0; }
.g-edit { width: 62px; }
.g-voice { width: 38px; }
.g-sens { width: 48px; }
.g-editor { width: 37px; }
.g-addins { width: 41px; margin-right: 72px; }

.body {
    height: 48px;
    display: flex;
    justify-content: center;
}

.caption {
    position: relative;
    height: 12px;
    text-align: center;
    font-family: "Open Sans", sans-serif;
    font-size: 7px;
}

.caption svg {
    position: absolute;
    right: 1px;
    bottom: 3px;
    width: 6px;
    height: 6px;
}

.big {
    flex-direction: column;
    justify-content: flex-start;
}

.big svg {
    width: 20px;
    height: 21px;
    margin-bottom: 2px;
}

.big .chev {
    width: 6px;
    height: 6px;
}

button:disabled {
    color: #b4b4b4;
}

button:disabled .chev {
    opacity: 0.4;
}

.clip {
    justify-content: flex-start;
    gap: 7px;
    padding-left: 11px;
}

.stack {
    display: flex;
    flex-direction: column;
    justify-content: space-between;
    align-items: flex-start;
    flex: 1;
}

.stack button {
    height: 14px;
    gap: 3px;
}

.stack svg {
    width: 10px;
    height: 10px;
}

.stack .chev {
    width: 6px;
    height: 6px;
}

.g-edit .stack {
    flex: none;
    padding-left: 9px;
}

.stack .far {
    margin-left: 10px;
}

.rows {
    flex-direction: column;
    justify-content: flex-start;
    gap: 4px;
    padding: 4px 0 0 5px;
}

.row {
    display: flex;
    align-items: center;
    height: 16px;
    gap: 1px;
}

.row select {
    appearance: none;
    height: 15px;
    padding: 0 2px;
    border: 1px solid #bdbdbd;
    border-radius: 2px;
    background: #fff url("data:image/svg+xml,%3Csvg xmlns='http://www.w3.org/2000/svg' viewBox='0 0 6 6'%3E%3Cpath d='m1 2 2 2 2-2' fill='none' stroke='%23444'/%3E%3C/svg%3E") right 1px center / 6px 6px no-repeat;
}

.font-name { width: 68px; }
.font-size { width: 40px; }

.ib, .split span {
    width: 16px;
    height: 16px;
    display: inline-flex;
    align-items: center;
    justify-content: center;
    font-size: 9px;
}

.split {
    margin-right: 1px;
}

.split .chev {
    width: 8px;
}

.row svg:not(.chev) {
    width: 11px;
    height: 11px;
}

.row .big-a {
    font-size: 11px;
}

.ib sup, .ib sub {
    font-size: 6px;
    line-height: 6px;
}

.ib sup {
    align-self: flex-start;
    margin-top: 2px;
}

.ib sub {
    align-self: flex-end;
    margin-bottom: 2px;
    color: #2f7fc8;
}

.serif {
    font-family: "Liberation Serif", serif;
}

.on {
    border: 1px solid #9a9a9a;
    border-radius: 3px;
    background-color: #ececec;
}

.sep {
    width: 1px;
    height: 14px;
    margin: 0 1px;
    background-color: #dedede;
}

.gallery {
    height: 39px;
    margin: 3px 5px 6px 6px;
    border-top: 1px solid #e4e4e4;
    border-bottom: 1px solid #e4e4e4;
}

.gallery button {
    flex: 1;
    min-width: 0;
    font-family: "Open Sans", "Noto Sans", sans-serif;
}

.gallery .picked {
    border: 2px solid #a2a2a2;
}

.gallery .h1 { font-size: 15px; color: #bf8a1e; }
.gallery .h2 { font-size: 10px; color: #c9982f; }
.gallery .h3 { font-size: 9px; color: #c9982f; }
.gallery .h4 { font-size: 8px; color: #e5b95a; }

.gallery .title {
    font-size: 34px;
    color: #111;
}

/* the big Title sample is cropped by its tile */
.title span {
    width: 56px;
    height: 25px;
    line-height: 16px;
    overflow: hidden;
    text-align: left;
}

.gallery .more {
    flex: none;
    width: 16px;
    margin: -1px 0;
    border: 1px solid #a2a2a2;
    border-radius: 2px;
}

.more svg {
    width: 6px;
    height: 6px;
}

.collapse {
    position: absolute;
    right: 4px;
    bottom: 4px;
}

.collapse svg {
    width: 9px;
    height: 9px;
}

/* rulers */
.hruler {
    height: 13px;
    flex: none;
    display: flex;
}

.corner {
    width: 4px;
    height: 4px;
    margin: 5px 4px;
    border-left: 2px solid #444;
    border-bottom: 2px solid #444;
}

.hruler-track {
    flex: 1;
    display: flex;
    justify-content: center;
    padding-right: 8px;
}

.hscale {
    width: 523px;
    height: 13px;
    margin-right: 535px;
}

.nums {
    font-size: 7px;
    fill: #555;
    text-anchor: middle;
}

.canvas {
    flex: 1;
    min-height: 0;
    display: flex;
    overflow: hidden;
}

.vruler {
    width: 12px;
    border-right: 1px solid #d5dadd;
}

.vruler svg {
    width: 12px;
    height: 325px;
}

.pages {
    flex: 1;
    display: flex;
    flex-wrap: wrap;
    justify-content: center;
    align-content: flex-start;
    gap: 10px 12px;
}

.page {
    width: 523px;
    height: 247px;
    background-color: #fff;
}

.cover {
    padding: 19px 13px 0 12px;
}

.cover p {
    margin: 0 84px 14px 0;
    line-height: 14px;
    text-align: right;
    color: #555;
}

.cover-band {
    position: relative;
    height: 183px;
    background: linear-gradient(90deg, #d8edf2 0%, #cfeaed 38%, #bfe3e8 60%, #a2d8df 82%, #8accd6 100%);
}

.ibeam {
    position: absolute;
    right: 56px;
    top: 126px;
    width: 8px;
    height: 12px;
}

.chart-page {
    padding: 31px 14px 0;
}

.chart-line {
    display: flex;
    align-items: flex-end;
    padding-left: 28px;
    font-size: 9px;
    line-height: 8px;
}

.chart {
    width: 421px;
    height: 137px;
    overflow: hidden;
    font-family: Lato, "Open Sans", sans-serif;
    font-size: 7px;
    font-variant-numeric: oldstyle-nums;
    fill: #555;
}

.end { text-anchor: end; }
.mid { text-anchor: middle; }

.chart-page footer {
    height: 25px;
    margin-top: 36px;
    padding-left: 28px;
    line-height: 26px;
    color: #fff;
    background-color: #a1d7de;
}

.returns {
    height: 420px;
    padding: 80px 43px 0;
}

.returns h1, .returns h2 {
    position: relative;
    font-family: Lato, "Open Sans", sans-serif;
    font-weight: normal;
    color: #bf8a1e;
}

.returns h1 {
    font-size: 16px;
    line-height: 22px;
}

.returns h2 {
    margin-top: 9px;
    font-size: 11px;
    line-height: 16px;
}

.returns h1::before, .returns h2::before {
    content: "";
    position: absolute;
    left: -5px;
    top: 7px;
    width: 3px;
    height: 3px;
    background-color: #111;
}

.returns p {
    line-height: 13px;
    white-space: nowrap;
    color: #111;
}

.returns p u {
    text-decoration: underline dotted #d08080 1px;
    text-underline-offset: 1px;
    text-decoration-skip-ink: none;
}

.returns .blank {
    line-height: 12px;
}

.kpis {
    display: flex;
    gap: 16px;
    margin: 19px 5px 0;
}

.kpi {
    width: 114px;
    height: 49px;
    display: flex;
    flex-direction: column;
    padding: 6px 1px;
    border-top: 3px solid #4aa3ab;
    border-bottom: 3px solid #4aa3ab;
    font-family: Lato, "Open Sans", sans-serif;
    font-size: 10px;
    line-height: 15px;
    white-space: nowrap;
    color: #3d9eaa;
}

.kpi b {
    color: #e5a93a;
}

.series {
    width: 421px;
    margin-top: 9px;
    border: 1px solid #e4e4e4;
    text-align: center;
    font-family: Lato, "Open Sans", sans-serif;
    font-size: 11px;
    font-variant-numeric: oldstyle-nums;
    color: #555;
}

.series span {
    display: block;
    line-height: 26px;
    height: 31px;
}

.series svg {
    width: 419px;
    height: 40px;
}

.vscroll {
    width: 8px;
    display: flex;
    flex-direction: column;
    align-items: center;
    padding: 4px 0 3px;
    background-color: #eef1f2;
}

.vscroll .up { border-bottom-color: #555; }
.vscroll .down { border-top-color: #555; margin-top: auto; }

.thumb {
    width: 4px;
    height: 204px;
    margin-top: 146px;
    border-radius: 2px;
    background-color: #666;
}

.word-status {
    height: 13px;
    flex: none;
    display: flex;
    align-items: center;
    gap: 11px;
    padding: 2px 3px 0 6px;
    font-family: Roboto, "Open Sans", sans-serif;
    font-size: 7px;
    background-color: #f4f4f4;
    color: #333;
}

.word-status svg {
    width: 10px;
    height: 10px;
}

.with-icon {
    display: flex;
    align-items: center;
    gap: 2px;
}

.status-right {
    margin-left: auto;
    display: flex;
    align-items: center;
    gap: 6px;
}

.status-links {
    display: flex;
    gap: 10px;
}

.views {
    display: flex;
}

.views button {
    width: 26px;
    height: 13px;
}

.views .on {
    border: none;
    border-radius: 0;
    background-color: #dedede;
}

.zoom {
    display: flex;
    align-items: center;
    gap: 3px;
    padding-right: 3px;
}

.zoom input {
    appearance: none;
    width: 64px;
    height: 8px;
    background: linear-gradient(#888, #888) center / 100% 1px no-repeat;
}

.zoom input::-webkit-slider-thumb {
    appearance: none;
    width: 3px;
    height: 7px;
    background-color: #555;
}
```
